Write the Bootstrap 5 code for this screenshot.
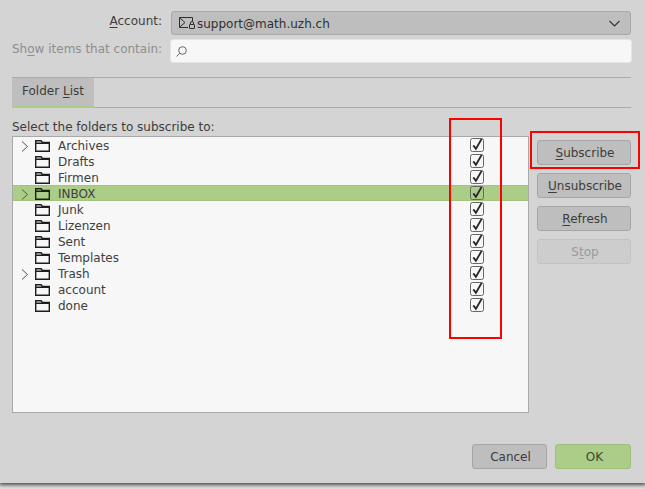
<!DOCTYPE html>
<html lang="en">
<head>
<meta charset="utf-8">
<link href="https://cdn.jsdelivr.net/npm/bootstrap@5.3.0/dist/css/bootstrap.min.css" rel="stylesheet">
<style>
html,body{height:489px;overflow:hidden;background:#e4e4e4}
body{font-family:"DejaVu Sans","Liberation Sans",sans-serif;font-size:12px;line-height:16px;color:#3c3c3c}
.dlg-shell{height:483px;background:#d4d4d4;padding:11px 13px 0 12px;box-shadow:0 1px 4px 1px rgba(0,0,0,.7);position:relative}
.form-line{display:flex;align-items:center;gap:9px}
.form-label-x{width:150px;text-align:right;margin:0;white-space:nowrap;flex:none;padding-bottom:4px}
.acct-select{flex:1;height:24px;background:#bebebe;border:1px solid #a8a8a8;border-radius:3px;display:flex;align-items:center;padding:0 10px 0 7px;gap:2px;color:#303030;margin-right:1px}
.acct-name{padding-top:2px}
.search-box{flex:1;height:24px;background:#f7f7f7;border:1px solid #e4e4e4;border-radius:3px;display:flex;align-items:center;padding-left:5px;margin-left:-1px}
.dim-text{color:#8e8e8e}
.tab-strip{margin-top:14px;height:31px;border-top:1px solid #ababab;border-bottom:1px solid #ababab;display:flex;margin-right:1px}
.tab-item{width:82px;background:#bebebe;border-bottom:2px solid #abcd88;margin-bottom:-1px;text-align:center;padding-top:5px;height:30px}
.sel-label{margin-top:10px;height:18px;line-height:18px}
.main-row{display:flex;gap:8px}
.tree-box{width:517px;height:277px;flex:none;background:#f7f7f7;border:1px solid #a9a9a9}
.tree-row{height:16px;display:flex;align-items:center;position:relative;color:#404040;line-height:16px;padding-top:2px}
.tree-row.is-sel{background:#abcd88;box-shadow:inset 0 1px #a2c47f,inset 0 -1px #a2c47f}
.arrow-slot{width:18px;flex:none;padding-left:8px;display:flex}
.fold-ico{flex:none;margin-left:4px;margin-right:8px;width:15px;height:12px}
.arr-ico{width:8px;height:11px}
.chk-ico{position:absolute;left:457px;top:1px;width:14px;height:14px}
.side-btns{width:94px;flex:none;padding-top:4px;display:flex;flex-direction:column;gap:8px}
.act-btn{height:25px;background:#bebebe;border:1px solid #a6a6a6;border-radius:3px;color:#3c3c3c;padding:1px 0 0 2px;font-size:12px;line-height:22px;text-align:center}
.act-btn:disabled{background:#cdcdcd;border-color:#c2c2c2;color:#9a9a9a;opacity:1}
.foot-btns{display:flex;justify-content:flex-end;gap:8px;margin-top:31px;margin-right:1px}
.foot-cancel{width:75px}
.foot-ok{width:76px;background:#abcd88;border-color:#9dbf7b;color:#3c4a30;padding-left:3px}
.red-frame{position:absolute;border:2px solid #f00;pointer-events:none}
.red-a{left:449px;top:118px;width:53px;height:221px}
.red-b{left:530px;top:131px;width:110px;height:38px}
.sprite-defs{position:absolute;width:0;height:0}
u{text-underline-offset:2px}
</style>
</head>
<body>
<svg class="sprite-defs" aria-hidden="true">
  <symbol id="ic-folder" viewBox="0 0 15 12"><path d="M.7 11.300V.7h5.400l1.200 1.800h7v8.800zM.7 3.200h13.600" fill="none" stroke="#1e1e1e" stroke-width="1.400"/></symbol>
  <symbol id="ic-arrow" viewBox="0 0 8 11"><path d="M1 .5l5.500 5-5.500 5" fill="none" stroke="#555" stroke-width="1"/></symbol>
  <symbol id="ic-check" viewBox="0 0 14 14"><rect x=".5" y=".5" width="13" height="13" rx="2" fill="none" stroke="#666"/><path d="M3.300 7.400l2.600 3.400L11.600 1" fill="none" stroke="#2a2a2a" stroke-width="1.800"/></symbol>
</svg>
<div class="dlg-shell">
  <div class="form-line">
    <label class="form-label-x"><u>A</u>ccount:</label>
    <div class="acct-select">
      <svg width="16" height="12" viewBox="0 0 16 12" fill="none" stroke="#303030"><path d="M9 10.500H.5V.5h13v3.500M.5.8l5.500 4.700-5.500 4.700"/><rect x="10.500" y="7.500" width="5" height="4" rx=".5"/><path d="M11.500 7.500V6a1.500 1.500 0 0 1 3 0v1.500"/></svg>
      <span class="flex-grow-1 acct-name">support@math.uzh.ch</span>
      <svg width="11" height="7" viewBox="0 0 11 7" fill="none" stroke="#333" stroke-width="1.100"><path d="M.5 1l5 5 5-5"/></svg>
    </div>
  </div>
  <div class="form-line mt-1">
    <label class="form-label-x dim-text">Sh<u>o</u>w items that contain:</label>
    <div class="search-box">
      <svg width="11" height="11" viewBox="0 0 11 11" fill="none" stroke="#555" stroke-width=".9"><circle cx="6.500" cy="4.500" r="3.800"/><path d="M3.800 7.200L.5 10.500"/></svg>
    </div>
  </div>
  <div class="tab-strip"><div class="tab-item">Folder <u>L</u>ist</div></div>
  <div class="sel-label">Select the folders to subscribe to:</div>
  <div class="main-row">
    <div class="tree-box">
      <div class="tree-row"><span class="arrow-slot"><svg class="arr-ico"><use href="#ic-arrow"/></svg></span><svg class="fold-ico"><use href="#ic-folder"/></svg>Archives<svg class="chk-ico"><use href="#ic-check"/></svg></div>
      <div class="tree-row"><span class="arrow-slot"></span><svg class="fold-ico"><use href="#ic-folder"/></svg>Drafts<svg class="chk-ico"><use href="#ic-check"/></svg></div>
      <div class="tree-row"><span class="arrow-slot"></span><svg class="fold-ico"><use href="#ic-folder"/></svg>Firmen<svg class="chk-ico"><use href="#ic-check"/></svg></div>
      <div class="tree-row is-sel"><span class="arrow-slot"><svg class="arr-ico"><use href="#ic-arrow"/></svg></span><svg class="fold-ico"><use href="#ic-folder"/></svg>INBOX<svg class="chk-ico"><use href="#ic-check"/></svg></div>
      <div class="tree-row"><span class="arrow-slot"></span><svg class="fold-ico"><use href="#ic-folder"/></svg>Junk<svg class="chk-ico"><use href="#ic-check"/></svg></div>
      <div class="tree-row"><span class="arrow-slot"></span><svg class="fold-ico"><use href="#ic-folder"/></svg>Lizenzen<svg class="chk-ico"><use href="#ic-check"/></svg></div>
      <div class="tree-row"><span class="arrow-slot"></span><svg class="fold-ico"><use href="#ic-folder"/></svg>Sent<svg class="chk-ico"><use href="#ic-check"/></svg></div>
      <div class="tree-row"><span class="arrow-slot"></span><svg class="fold-ico"><use href="#ic-folder"/></svg>Templates<svg class="chk-ico"><use href="#ic-check"/></svg></div>
      <div class="tree-row"><span class="arrow-slot"><svg class="arr-ico"><use href="#ic-arrow"/></svg></span><svg class="fold-ico"><use href="#ic-folder"/></svg>Trash<svg class="chk-ico"><use href="#ic-check"/></svg></div>
      <div class="tree-row"><span class="arrow-slot"></span><svg class="fold-ico"><use href="#ic-folder"/></svg>account<svg class="chk-ico"><use href="#ic-check"/></svg></div>
      <div class="tree-row"><span class="arrow-slot"></span><svg class="fold-ico"><use href="#ic-folder"/></svg>done<svg class="chk-ico"><use href="#ic-check"/></svg></div>
    </div>
    <div class="side-btns">
      <button class="btn act-btn"><u>S</u>ubscribe</button>
      <button class="btn act-btn"><u>U</u>nsubscribe</button>
      <button class="btn act-btn"><u>R</u>efresh</button>
      <button class="btn act-btn" disabled>S<u>t</u>op</button>
    </div>
  </div>
  <div class="foot-btns">
    <button class="btn act-btn foot-cancel">Cancel</button>
    <button class="btn act-btn foot-ok">OK</button>
  </div>
  <div class="red-frame red-a"></div>
  <div class="red-frame red-b"></div>
</div>
</body>
</html>
